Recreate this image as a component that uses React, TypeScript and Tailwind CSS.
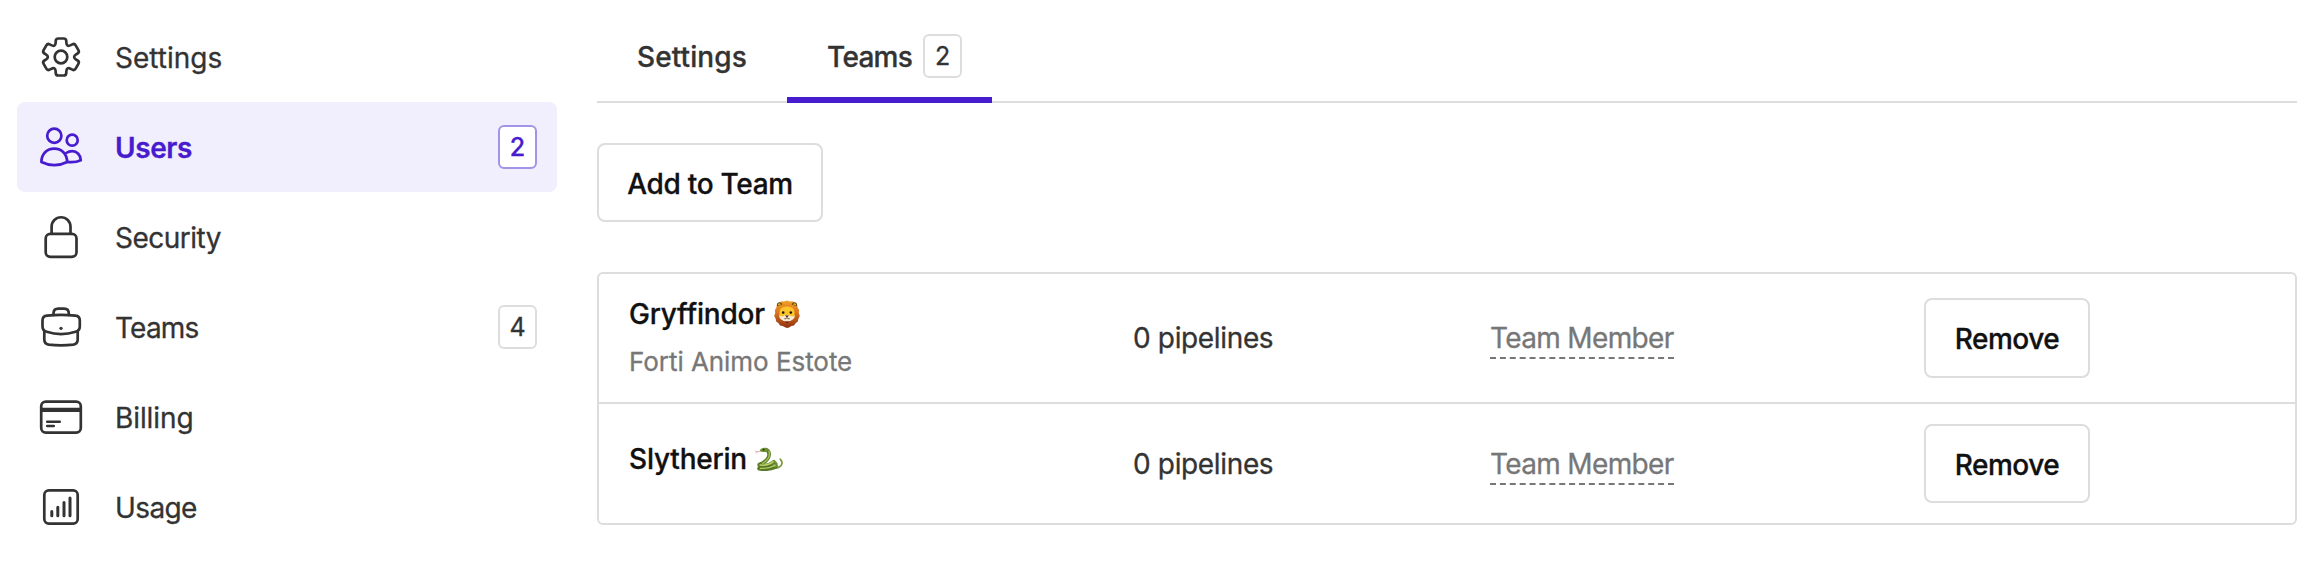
import React from "react";

type Point = [number, number];

/** Closed polygon whose corners are cut back and joined by quadratic curves. */
function roundedPolygon(points: Point[], cut: number): string {
  const n = points.length;
  const toward = (a: Point, b: Point): Point => {
    const d = Math.hypot(b[0] - a[0], b[1] - a[1]);
    const t = Math.min(cut / d, 0.5);
    return [a[0] + (b[0] - a[0]) * t, a[1] + (b[1] - a[1]) * t];
  };
  const f = (p: Point) => `${p[0].toFixed(2)} ${p[1].toFixed(2)}`;
  return (
    points
      .map((p, i) => {
        const start = toward(p, points[(i + n - 1) % n]);
        const end = toward(p, points[(i + 1) % n]);
        return `${i === 0 ? "M" : "L"}${f(start)}Q${f(p)} ${f(end)}`;
      })
      .join("") + "Z"
  );
}

const polar = (deg: number, r: number): Point => {
  const a = (deg * Math.PI) / 180;
  return [24 + r * Math.sin(a), 24 - r * Math.cos(a)];
};

const gearPath = roundedPolygon(
  [0, 60, 120, 180, 240, 300].flatMap((t) => [
    polar(t - 15.5, 19.2),
    polar(t + 15.5, 19.2),
    polar(t + 24.5, 13.2),
    polar(t + 35.5, 13.2),
  ]),
  2.4
);

function Icon({ children }: { children: React.ReactNode }) {
  return (
    <svg
      className="size-12 shrink-0"
      viewBox="0 0 48 48"
      fill="none"
      stroke="currentColor"
      strokeWidth={2.7}
      strokeLinecap="round"
      strokeLinejoin="round"
      aria-hidden="true"
    >
      {children}
    </svg>
  );
}

const GearIcon = () => (
  <Icon>
    <path d={gearPath} />
    <circle cx="24" cy="24" r="6.3" />
  </Icon>
);

const UsersIcon = () => (
  <Icon>
    <circle cx="17.3" cy="12.7" r="7.1" />
    <circle cx="35.2" cy="17.2" r="5.5" />
    <path d="M4.4 39C4.4 30.8 10 25.6 17.3 25.6S30 30.8 30.2 39Q17.3 45.4 4.4 39Z" />
    <path d="M29.2 30C31 28.8 33 28.2 35.2 28.2C40 28.2 43.6 32 43.8 37.2Q38 40 30.2 38.9" />
  </Icon>
);

const LockIcon = () => (
  <Icon>
    <rect x="8.7" y="20.8" width="30.8" height="23" rx="4.6" />
    <path d="M14.6 20.7V13.7a9.45 9.45 0 0 1 18.9 0V20.7" />
  </Icon>
);

const BriefcaseIcon = () => (
  <Icon>
    <path d="M16.5 12V10.4Q16.5 5.6 21.3 5.6H27Q31.8 5.6 31.8 10.4V12" />
    <path d="M10 12.6Q24 11.2 38.3 12.6Q42.8 13 42.8 17.4V23.2Q42.8 27.6 38.6 28.8Q24 33.4 9.7 28.8Q5.5 27.6 5.5 23.2V17.4Q5.5 13 10 12.6Z" />
    <path d="M7.3 28V36.4Q7.3 40.8 11.8 41.6Q24 43 36.2 41.6Q40.7 40.8 40.7 36.4V28" />
    <circle cx="24" cy="25.3" r="1.6" fill="currentColor" stroke="none" />
  </Icon>
);

const CardIcon = () => (
  <Icon>
    <rect x="4.2" y="8.7" width="39.6" height="31" rx="4.6" />
    <path d="M4.2 16.9H43.8" strokeWidth={4.2} strokeLinecap="butt" />
    <path d="M10.2 28.7H22.8M10.2 33.1H16.8" strokeWidth={2.5} />
  </Icon>
);

const ChartIcon = () => (
  <Icon>
    <rect x="7.3" y="7.3" width="33.4" height="33.4" rx="4.6" />
    <path d="M14.8 32.7V28.6M20.8 32.7V24.2M27 32.7V19.4M33 32.7V15" strokeWidth={3} />
  </Icon>
);

function Lion() {
  return (
    <svg className="h-7 w-[26px] shrink-0" viewBox="0 0 26 28" role="img" aria-label="lion">
      <defs>
        <linearGradient id="mane" x1="0" y1="0" x2="0" y2="1">
          <stop offset="0" stopColor="#f2a127" />
          <stop offset="0.45" stopColor="#d9731f" />
          <stop offset="1" stopColor="#8f3113" />
        </linearGradient>
      </defs>
      <path
        d="M13 .4L16 1.4L18.6 1.2L21 3L23.2 4.4L23.6 7.4L25 10L24.8 13L25.8 16L24.4 18.8L23.8 21.6L21.6 23.2L20 25.6L17.4 25.9L15 27.4L13 27.9L11 27.2L8.6 26L6 25.4L4.4 23L2.2 21.4L1.6 18.6L.2 16L1.2 13L1 10L2.4 7.4L2.8 4.4L5 3L7.4 1.2L10 1.4Z"
        fill="url(#mane)"
      />
      <path d="M3.2 6.2Q2.2 2 6 2.2Q8 2.4 8.4 4.4ZM22.8 6.2Q23.8 2 20 2.2Q18 2.4 17.6 4.4Z" fill="#5e4a14" />
      <path d="M4 5.6Q3.4 3 6 3.2L7 4.4ZM22 5.6Q22.6 3 20 3.2L19 4.4Z" fill="#e9ad25" />
      <path d="M13 5.4Q20.2 6.4 20.6 12.6Q21.6 20.6 13 21.2Q4.4 20.6 5.4 12.6Q5.8 6.4 13 5.4Z" fill="#fbc52c" />
      <path d="M5 9.4Q8 4.2 13 4.8Q18 4.2 21 9.4Q17 6.6 13 6.6Q9 6.6 5 9.4Z" fill="#e88d1f" />
      <path d="M4.8 15Q7 18 11 15.2L13 15.6L15 15.2Q19 18 21.2 15Q20.4 20.8 13 21.6Q5.6 20.8 4.8 15Z" fill="#f6ecd6" />
      <circle cx="9.2" cy="12.6" r="1.3" fill="#2a1609" />
      <circle cx="16.8" cy="12.6" r="1.3" fill="#2a1609" />
      <path d="M11 15.4H15L13 17.6Z" fill="#3c1d10" />
      <path d="M10.4 18.8Q12.6 19.2 13 17.4Q13.4 19.2 15.6 18.8" fill="none" stroke="#5e3018" strokeWidth=".8" />
      <path d="M11 21.4H15L13 23.6Z" fill="#6e240e" />
    </svg>
  );
}

function Snake() {
  return (
    <svg
      className="h-6 w-7 shrink-0"
      viewBox="0 0 28 24"
      fill="none"
      strokeLinecap="round"
      strokeLinejoin="round"
      role="img"
      aria-label="snake"
    >
      <path d="M5 4.2L2.4 4.9L.4 4M2.4 4.9L1 6" stroke="#e79aa6" strokeWidth=".8" />
      <path d="M25.2 12.2Q28.4 15.6 26 18.6Q24 20.8 20.6 21.2" stroke="#7f9c3e" strokeWidth="1.7" />
      <path d="M4.4 21.4Q12 23 20.6 19.6" stroke="#59792a" strokeWidth="4.4" />
      <path d="M4.2 18.2Q13 19.8 18.8 14.6Q21.4 16.6 20.8 19" stroke="#6f9032" strokeWidth="3.6" />
      <path d="M11.2 2.6Q15.6 5 13.4 10.6Q11.4 15 4.4 17.4" stroke="#59792a" strokeWidth="3.6" />
      <path d="M4.8 4Q5.2 1.2 9 .7Q13 .5 13.4 3.4Q12.2 5.2 8.6 4.9Q6.4 5 4.8 4Z" fill="#6f9032" />
      <path d="M14 4.2Q15 7 13.8 10.4Q11.8 14.4 7.6 16.4" stroke="#a3c152" strokeWidth="1.5" />
      <path d="M5 18Q12.8 18.8 18 14.8" stroke="#bdd46d" strokeWidth="1.5" />
      <path d="M5.4 21.2Q13.4 22 20 18.4" stroke="#b3cc61" strokeWidth="1.5" />
      <path d="M4.2 19.8Q12.8 21 19.2 16.8" stroke="#40591c" strokeWidth=".8" />
      <circle cx="8.6" cy="2.6" r=".9" fill="#1f2b0c" />
    </svg>
  );
}

function Badge({ value, active = false }: { value: number; active?: boolean }) {
  return (
    <span
      className={`flex h-11 w-[39px] shrink-0 items-center justify-center rounded-md border-2 bg-white text-[25px] leading-none ${
        active ? "border-[#a195e8] font-medium text-[#471bce]" : "border-[#ddd] text-[#333]"
      }`}
    >
      {value}
    </span>
  );
}

interface NavEntry {
  label: string;
  icon: React.ReactNode;
  count?: number;
  active?: boolean;
  spacing: string;
}

const nav: NavEntry[] = [
  { label: "Settings", icon: <GearIcon />, spacing: "tracking-[0px]" },
  { label: "Users", icon: <UsersIcon />, count: 2, active: true, spacing: "tracking-[-0.4px]" },
  { label: "Security", icon: <LockIcon />, spacing: "tracking-[-0.5px]" },
  { label: "Teams", icon: <BriefcaseIcon />, count: 4, spacing: "tracking-[-0.8px]" },
  { label: "Billing", icon: <CardIcon />, spacing: "tracking-[-0.1px]" },
  { label: "Usage", icon: <ChartIcon />, spacing: "tracking-[-0.6px]" },
];

function Sidebar() {
  return (
    <nav className="flex w-[540px] shrink-0 flex-col pt-3">
      {nav.map((item) => (
        <a
          key={item.label}
          className={`flex h-[90px] items-center rounded-lg pr-5 pl-5 ${
            item.active ? "bg-[#f1eefd] font-[560] text-[#471bce]" : "text-[#333]"
          }`}
        >
          {item.icon}
          <span className={`ml-[30px] flex-1 pt-0.5 text-[28px] leading-10 ${item.spacing}`}>{item.label}</span>
          {item.count !== undefined && <Badge value={item.count} active={item.active} />}
        </a>
      ))}
    </nav>
  );
}

const buttonClass =
  "flex items-center justify-center rounded-lg border-2 border-[#ddd] bg-white pt-0.5 text-[28px] font-[540] leading-none text-[#111]";

interface Team {
  name: string;
  emoji: React.ReactNode;
  motto?: string;
  rowClass: string;
  nameClass: string;
  buttonHeight: string;
}

const teams: Team[] = [
  {
    name: "Gryffindor",
    emoji: <Lion />,
    motto: "Forti Animo Estote",
    rowClass: "h-[130px] border-b-2 border-[#ddd]",
    nameClass: "gap-[9px] tracking-[-0.2px]",
    buttonHeight: "h-20",
  },
  {
    name: "Slytherin",
    emoji: <Snake />,
    rowClass: "h-[119px]",
    nameClass: "gap-2 mb-[9px] tracking-[-0.2px]",
    buttonHeight: "h-[79px]",
  },
];

function TeamRow({ team }: { team: Team }) {
  return (
    <div className={`grid grid-cols-[504px_356px_435px_auto] items-center pl-[30px] ${team.rowClass}`}>
      <div>
        <div className={`flex h-12 items-center text-[28px] font-[540] text-[#111] ${team.nameClass}`}>
          <span>{team.name}</span>
          {team.emoji}
        </div>
        {team.motto && (
          <div className="text-[26px] leading-[48px] tracking-[-0.05px] text-[#777]">{team.motto}</div>
        )}
      </div>
      <div className="text-[28px] leading-10 tracking-[-0.35px] text-[#333]">0 pipelines</div>
      <div className="flex pt-0.5 pl-px">
        <span className="border-b-2 border-dashed border-[#777] text-[28px] leading-[38px] tracking-[-0.65px] text-[#777]">
          Team Member
        </span>
      </div>
      <button className={`w-[166px] tracking-[-0.5px] ${buttonClass} ${team.buttonHeight}`}>Remove</button>
    </div>
  );
}

export default function App() {
  return (
    <div className="flex h-[588px] w-[2314px] gap-10 bg-white pr-[17px] pl-[17px] font-['Inter',sans-serif] font-normal [-webkit-text-stroke:0.3px]">
      <Sidebar />
      <main className="flex flex-1 flex-col">
        <div className="flex h-[103px] border-b-2 border-[#ddd] text-[28px] font-[540] text-[#333]">
          <div className="flex w-[190px] items-center pt-[13px] pl-10 tracking-[0.1px]">Settings</div>
          <div className="-mb-0.5 flex w-[205px] items-center border-b-[6px] border-[#471bce] pt-[15px] pl-10">
            <span className="w-24 pt-px tracking-[-0.7px]">Teams</span>
            <span className="font-normal">
              <Badge value={2} />
            </span>
          </div>
        </div>
        <button className={`mt-10 h-[79px] w-[226px] tracking-[-0.3px] ${buttonClass}`}>Add to Team</button>
        <section className="mt-[50px] rounded-md border-2 border-[#ddd]">
          {teams.map((team) => (
            <TeamRow key={team.name} team={team} />
          ))}
        </section>
      </main>
    </div>
  );
}
